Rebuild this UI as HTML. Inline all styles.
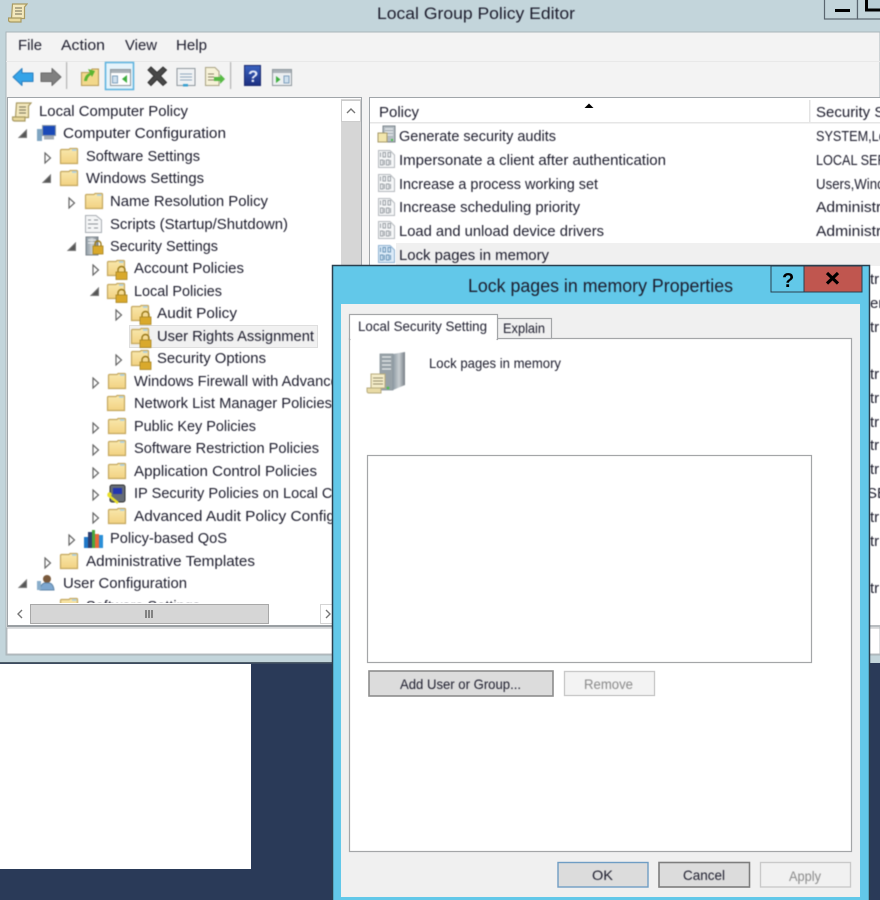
<!DOCTYPE html>
<html><head><meta charset="utf-8"><title>Local Group Policy Editor</title>
<style>
html,body{margin:0;padding:0;width:880px;height:900px;overflow:hidden;background:#2a3a58}
svg{display:block}
text{font-family:"Liberation Sans",sans-serif;font-size:15px;fill:#1c1c2c}
.t{filter:blur(.4px)}
.s{font-size:14px}
.g{fill:#8a8a8a}
</style></head><body>
<svg xmlns="http://www.w3.org/2000/svg" width="880" height="900" viewBox="0 0 880 900">
<defs>
<linearGradient id="fg" x1="0" y1="0" x2="0" y2="1"><stop offset="0" stop-color="#f9e8ad"/><stop offset="1" stop-color="#f2d282"/></linearGradient>
<linearGradient id="btn" x1="0" y1="0" x2="0" y2="1"><stop offset="0" stop-color="#3a62c0"/><stop offset="1" stop-color="#1c2f80"/></linearGradient>
<linearGradient id="srv" x1="0" y1="0" x2="1" y2="0"><stop offset="0" stop-color="#8d9aa3"/><stop offset=".5" stop-color="#c8ced2"/><stop offset="1" stop-color="#777f86"/></linearGradient>
<symbol id="folder" width="18" height="16" viewBox="0 0 18 16" overflow="visible">
<path d="M.5 2.500Q.5 1.500 1.500 1.500H9L10 .5H16.500Q17.500 .5 17.500 1.500V15.500H.5Z" fill="url(#fg)" stroke="#c4a75e" stroke-width="1.200"/>
<rect x="12" y="1.200" width="4.500" height="1.600" fill="#a9cfe6"/>
</symbol>
<symbol id="lockf" width="22" height="20" viewBox="0 0 22 20" overflow="visible">
<use href="#folder" x="0" y="0"/>
<path d="M11 12V10a3.500 3.500 0 0 1 7 0v2" fill="none" stroke="#9a7a1c" stroke-width="1.400"/>
<rect x="9" y="12" width="11" height="7.500" fill="#d9a92c" stroke="#a88420" stroke-width=".8"/>
</symbol>
<symbol id="ec" width="8" height="12" viewBox="0 0 8 12"><path d="M1 1L6.500 6L1 11Z" fill="#fff" stroke="#666" stroke-width="1.200"/></symbol>
<symbol id="eo" width="10" height="10" viewBox="0 0 10 10"><path d="M8.500 1V8.500H1Z" fill="#555" stroke="#777"/></symbol>
<symbol id="scroll" width="20" height="20" viewBox="0 0 20 20">
<path d="M4.500 1H19L16.500 4V15.500H3.500Z" fill="#f4e9bd" stroke="#a99a62" stroke-width="1.200"/>
<path d="M.5 15H13V19H3Q.5 19 .5 17Z" fill="#e9d99c" stroke="#a99a62" stroke-width="1.200"/>
<path d="M7 5H14M7 8H14M7 11H14" stroke="#8b8568" stroke-width="1.200"/>
</symbol>
<symbol id="bin" width="17" height="18" viewBox="0 0 17 18">
<path d="M.5.5H12L16.500 5V17.500H.5Z" fill="#f6f7f8" stroke="#b4b8bd"/>
<path d="M2.500 2.500V7M5 2.500h2.500v4.500H5ZM10 2.500h2.500v4.500H10ZM2.500 10h2.500v5H2.500ZM6.500 10V15M8.500 10h2.500v5H8.500ZM12.500 10V15" fill="none" stroke="#9aa0a6" stroke-width="1"/>
</symbol>
<symbol id="binb" width="17" height="18" viewBox="0 0 17 18">
<path d="M.5.5H12L16.500 5V17.500H.5Z" fill="#dcebf8" stroke="#8fb2d2"/>
<path d="M2.500 2.500V7M5 2.500h2.500v4.500H5ZM10 2.500h2.500v4.500H10ZM2.500 10h2.500v5H2.500ZM6.500 10V15M8.500 10h2.500v5H8.500ZM12.500 10V15" fill="none" stroke="#6b95b8" stroke-width="1"/>
</symbol>
</defs>

<!-- desktop -->
<rect width="880" height="900" fill="#2a3a58"/>
<rect x="0" y="664" width="251" height="205" fill="#fff"/>
<!-- main window -->
<rect x="0" y="0" width="880" height="663" fill="#c3d5db"/>
<rect x="0" y="662" width="332" height="1.500" fill="#4d5c68"/>
<rect x="6" y="32" width="874" height="623" fill="#f3f3f3" stroke="#a9b5ba"/>
<rect x="6" y="61" width="874" height="1" fill="#e8e8e8"/>
<!-- caption buttons -->
<rect x="824.500" y="-3" width="33" height="22" fill="#c3d5db" stroke="#5a6670" stroke-width="1.200"/>
<rect x="857.500" y="-3" width="30" height="22" fill="#c3d5db" stroke="#5a6670" stroke-width="1.200"/>
<rect x="835" y="9" width="15" height="3" fill="#000"/>
<rect x="866.500" y="-2" width="20" height="12" fill="#b9cfd6" stroke="#000" stroke-width="3"/>

<use href="#scroll" x="8" y="3"/>
<g class="t">
<text x="377" y="19" style="font-size:17px" textLength="198" lengthAdjust="spacingAndGlyphs">Local Group Policy Editor</text>
<text x="18" y="50" textLength="24" lengthAdjust="spacingAndGlyphs">File</text>
<text x="61" y="50" textLength="44" lengthAdjust="spacingAndGlyphs">Action</text>
<text x="125" y="50" textLength="32" lengthAdjust="spacingAndGlyphs">View</text>
<text x="176" y="50" textLength="31" lengthAdjust="spacingAndGlyphs">Help</text>
</g>

<!-- toolbar -->
<g class="t">
<path d="M13 77L22 68.500V73H33V81.500H22V85.500Z" fill="#35a4e8" stroke="#2b7fc0" stroke-linejoin="round"/>
<path d="M61 77L52 68.500V73H41V81.500H52V85.500Z" fill="#808080" stroke="#6a6a6a" stroke-linejoin="round"/>
<rect x="66" y="62" width="1.200" height="27" fill="#b4b4b4"/>
<path d="M81.500 72.500H90L92 69H98.500V85.500H81.500Z" fill="#f2d88b" stroke="#b89a55"/>
<path d="M84 81Q85 74 90 73L88 69L95 71L92 77L91 75Q88 76 87 81Z" fill="#5cb531"/>
<rect x="105.500" y="62.500" width="28" height="27" fill="#e5f3fb" stroke="#58b0dd" stroke-width="1.500"/>
<rect x="110.500" y="69.500" width="20" height="16" fill="#fff" stroke="#8e969c"/>
<rect x="111" y="70" width="19" height="3" fill="#aab2b8"/>
<path d="M112.500 76h5v7h-5Z" fill="#cfe0ee" stroke="#7fa0bd"/>
<path d="M127 75v8l-5-4Z" fill="#3fae3f"/>
<path d="M148 70l3-3 6 5.500 6-5.500 3.500 3-6 6 6 6.500-3.500 3-6-6-6 6-3-3 6-6.500Z" fill="#484848" stroke="#333"/>
<rect x="177" y="68.500" width="18" height="17" fill="#f0f2f4" stroke="#8f979d"/>
<path d="M180 74h12M180 77h12M180 80h12" stroke="#8fa7bd"/>
<rect x="183" y="84" width="5" height="2.500" fill="#39a0d0"/>
<path d="M205.500 67.500H215L219 71.500V85.500H205.500Z" fill="#f7f2d8" stroke="#a9a283"/>
<path d="M208 74h6M208 77h6M208 80h6" stroke="#8b8568"/>
<path d="M225 79l-5-5v3h-6v4h6v3Z" fill="#57b944"/>
<rect x="230" y="62" width="1.200" height="27" fill="#b4b4b4"/>
<rect x="244.500" y="65.500" width="16" height="20" fill="url(#btn)" stroke="#1b2a70"/>
<text x="248" y="82" style="font-size:17px;font-weight:bold;fill:#e4e9f8">?</text>
<rect x="272.500" y="69.500" width="19" height="16" fill="#eceff1" stroke="#8e969c"/>
<rect x="273" y="70" width="18" height="3" fill="#aab2b8"/>
<path d="M276 76v7l4.500-3.500Z" fill="#3fae3f"/>
<path d="M284 76h5v7h-5Z" fill="#cfe0ee" stroke="#7fa0bd"/>
</g>

<!-- tree panel -->
<rect x="7.500" y="97.500" width="354" height="529" fill="#fff" stroke="#a0a5a9"/>
<!-- highlight -->
<rect x="129.500" y="325.500" width="188" height="22" fill="#f1f1f1" stroke="#dedede"/>

<g class="t">
<use href="#scroll" x="12" y="102"/>
<text x="39" y="116" textLength="149" lengthAdjust="spacingAndGlyphs">Local Computer Policy</text>

<use href="#eo" x="18" y="129"/>
<rect x="42.500" y="125.500" width="13" height="10" fill="#1a4ab8" stroke="#8b99a8"/><rect x="37" y="129" width="5" height="12" fill="#7fa5c2"/><rect x="44" y="136" width="10" height="3.500" fill="#a5adb4"/>
<text x="63" y="138" textLength="163" lengthAdjust="spacingAndGlyphs">Computer Configuration</text>

<use href="#ec" x="44" y="152"/><use href="#folder" x="60" y="148"/>
<text x="86" y="161" textLength="114" lengthAdjust="spacingAndGlyphs">Software Settings</text>

<use href="#eo" x="42" y="174"/><use href="#folder" x="60" y="170"/>
<text x="86" y="183" textLength="118" lengthAdjust="spacingAndGlyphs">Windows Settings</text>

<use href="#ec" x="68" y="197"/><use href="#folder" x="85" y="193"/>
<text x="110" y="206" textLength="158" lengthAdjust="spacingAndGlyphs">Name Resolution Policy</text>

<path d="M85.500 215.500H96L101.500 220V232.500H85.500Z" fill="#f4f5f6" stroke="#a8adb3"/><path d="M88 220h3M94 220h4M88 224h10M88 228h3M94 228h4" stroke="#8d9298"/>
<text x="110" y="229" textLength="178" lengthAdjust="spacingAndGlyphs">Scripts (Startup/Shutdown)</text>

<use href="#eo" x="67" y="242"/>
<rect x="86" y="237" width="12" height="18" fill="url(#srv)" stroke="#7c858c"/><path d="M88 240h8M88 243h8" stroke="#eef0f2"/>
<path d="M95 246v-2a3 3 0 0 1 6 0v2" fill="none" stroke="#9a7a1c" stroke-width="1.400"/><rect x="93" y="246" width="10" height="8" fill="#d9a92c" stroke="#a88420" stroke-width=".8"/>
<text x="110" y="251" textLength="108" lengthAdjust="spacingAndGlyphs">Security Settings</text>

<use href="#ec" x="92" y="264"/><use href="#lockf" x="107" y="260"/>
<text x="134" y="273" textLength="110" lengthAdjust="spacingAndGlyphs">Account Policies</text>

<use href="#eo" x="90" y="287"/><use href="#lockf" x="107" y="283"/>
<text x="134" y="296" textLength="88" lengthAdjust="spacingAndGlyphs">Local Policies</text>

<use href="#ec" x="115" y="309"/><use href="#lockf" x="131" y="305"/>
<text x="157" y="318" textLength="80" lengthAdjust="spacingAndGlyphs">Audit Policy</text>

<use href="#lockf" x="131" y="328"/>
<text x="157" y="341" textLength="157" lengthAdjust="spacingAndGlyphs">User Rights Assignment</text>

<use href="#ec" x="115" y="354"/><use href="#lockf" x="131" y="350"/>
<text x="157" y="363" textLength="109" lengthAdjust="spacingAndGlyphs">Security Options</text>

<use href="#ec" x="92" y="377"/><use href="#folder" x="108" y="373"/>
<text x="134" y="386" textLength="270" lengthAdjust="spacingAndGlyphs">Windows Firewall with Advanced Security</text>

<use href="#folder" x="107" y="395"/>
<text x="134" y="408" textLength="198" lengthAdjust="spacingAndGlyphs">Network List Manager Policies</text>

<use href="#ec" x="92" y="422"/><use href="#folder" x="108" y="418"/>
<text x="134" y="431" textLength="122" lengthAdjust="spacingAndGlyphs">Public Key Policies</text>

<use href="#ec" x="92" y="444"/><use href="#folder" x="108" y="440"/>
<text x="134" y="453" textLength="185" lengthAdjust="spacingAndGlyphs">Software Restriction Policies</text>

<use href="#ec" x="92" y="467"/><use href="#folder" x="108" y="463"/>
<text x="134" y="476" textLength="183" lengthAdjust="spacingAndGlyphs">Application Control Policies</text>

<use href="#ec" x="92" y="489"/>
<rect x="110" y="485" width="15" height="17" rx="2" fill="#656c76" stroke="#333"/><rect x="113" y="488" width="9" height="6" fill="#2236b0"/><path d="M108 495L118 503" stroke="#e8df2a" stroke-width="2.500"/><circle cx="109.500" cy="494.500" r="2.200" fill="#e8df2a"/>
<text x="134" y="498" textLength="252" lengthAdjust="spacingAndGlyphs">IP Security Policies on Local Computer</text>

<use href="#ec" x="92" y="512"/><use href="#folder" x="108" y="508"/>
<text x="134" y="521" textLength="248" lengthAdjust="spacingAndGlyphs">Advanced Audit Policy Configuration</text>

<use href="#ec" x="68" y="534"/>
<rect x="84" y="537" width="4" height="11" fill="#1f78c8"/><rect x="88" y="532" width="4" height="16" fill="#2c3f70"/><rect x="92" y="530" width="3" height="18" fill="#49a63c"/><rect x="95" y="534" width="4" height="14" fill="#e8693a"/><rect x="99" y="535" width="4" height="13" fill="#2a8fd8"/>
<text x="110" y="543" textLength="117" lengthAdjust="spacingAndGlyphs">Policy-based QoS</text>

<use href="#ec" x="44" y="557"/><use href="#folder" x="60" y="553"/>
<text x="86" y="566" textLength="169" lengthAdjust="spacingAndGlyphs">Administrative Templates</text>

<use href="#eo" x="18" y="579"/>
<circle cx="47" cy="579" r="4" fill="#7a5a3c"/><path d="M40 590Q41 582 47 583Q53 582 54 590Z" fill="#7ea7cf" stroke="#5f85a8"/><rect x="37" y="581" width="4" height="9" fill="#8aaecb"/>
<text x="63" y="588" textLength="124" lengthAdjust="spacingAndGlyphs">User Configuration</text>

<use href="#folder" x="60" y="598"/>
<text x="86" y="611" textLength="114" lengthAdjust="spacingAndGlyphs">Software Settings</text>
</g>

<!-- tree scrollbars -->
<rect x="8" y="603" width="333" height="23" fill="#fff"/>
<rect x="10" y="604" width="311" height="20" fill="#fff"/>
<rect x="30.500" y="604.500" width="238" height="19" fill="#d6d6d6" stroke="#a8a8a8"/>
<path d="M146 610v8M149 610v8M152 610v8" stroke="#555" stroke-width="1.300"/>
<path d="M22 610l-4 4 4 4" fill="none" stroke="#777" stroke-width="1.400"/>
<rect x="320.500" y="604.500" width="20" height="19" fill="#fff" stroke="#d4d4d4"/>
<path d="M326 610l4 4-4 4" fill="none" stroke="#777" stroke-width="1.400"/>
<rect x="7" y="625" width="355" height="2" fill="#9a9fa3"/>
<rect x="341" y="99" width="20" height="527" fill="#d6d6d6"/>
<rect x="341.500" y="100.500" width="19" height="21" fill="#fff" stroke="#ccc"/>
<path d="M347 113l4-4 4 4" fill="none" stroke="#777" stroke-width="1.400"/>

<!-- status bar -->
<rect x="7" y="628" width="873" height="26" fill="#fff" stroke="#b9bdc0"/>

<!-- list panel -->
<rect x="369.500" y="97.500" width="520" height="529" fill="#fff" stroke="#a0a5a9"/>
<rect x="370" y="122" width="510" height="1.500" fill="#e6e6e6"/>
<rect x="809" y="100" width="1.500" height="22" fill="#e3e3e3"/>
<rect x="396" y="243" width="484" height="23" fill="#f0f0f0"/>
<path d="M584.500 108L589 103.500L593.500 108Z" fill="#000"/>
<g class="t">
<text x="379" y="117" textLength="40" lengthAdjust="spacingAndGlyphs">Policy</text>
<text x="816" y="117">Security Setting</text>

<rect x="383" y="126" width="12" height="16" fill="#b4bcc2" stroke="#7c858c"/><path d="M385 129h8M385 132h8M385 135h8" stroke="#eef0f2"/>
<path d="M378 133h9v9h-9Z" fill="#f2e6ad" stroke="#a79a6a"/><rect x="391" y="139" width="2" height="2" fill="#48c048"/>
<text x="399" y="141" textLength="157" lengthAdjust="spacingAndGlyphs">Generate security audits</text>
<text x="816" y="141" textLength="86" lengthAdjust="spacingAndGlyphs">SYSTEM,Local</text>

<use href="#bin" x="378" y="150"/>
<text x="399" y="165" textLength="267" lengthAdjust="spacingAndGlyphs">Impersonate a client after authentication</text>
<text x="816" y="165" textLength="100" lengthAdjust="spacingAndGlyphs">LOCAL SERVICE</text>

<use href="#bin" x="378" y="174"/>
<text x="399" y="189" textLength="199" lengthAdjust="spacingAndGlyphs">Increase a process working set</text>
<text x="816" y="189" textLength="92" lengthAdjust="spacingAndGlyphs">Users,Windows</text>

<use href="#bin" x="378" y="198"/>
<text x="399" y="212" textLength="181" lengthAdjust="spacingAndGlyphs">Increase scheduling priority</text>
<text x="816" y="212" textLength="100" lengthAdjust="spacingAndGlyphs">Administrators</text>

<use href="#bin" x="378" y="221"/>
<text x="399" y="236" textLength="205" lengthAdjust="spacingAndGlyphs">Load and unload device drivers</text>
<text x="816" y="236" textLength="100" lengthAdjust="spacingAndGlyphs">Administrators</text>

<use href="#binb" x="378" y="245"/>
<text x="399" y="260" textLength="150" lengthAdjust="spacingAndGlyphs">Lock pages in memory</text>

<!-- right column fragments beside the dialog -->
<text x="870" y="284">tr</text>
<text x="870" y="308">er</text>
<text x="870" y="332">tr</text>
<text x="870" y="379">tr</text>
<text x="870" y="403">tr</text>
<text x="870" y="427">tr</text>
<text x="870" y="450">tr</text>
<text x="870" y="474">tr</text>
<text x="867" y="498">SE</text>
<text x="870" y="522">tr</text>
<text x="870" y="546">tr</text>
<text x="870" y="593">tr</text>
</g>
<rect x="870" y="625" width="10" height="2" fill="#b9bdc0"/>

<!-- dialog -->
<rect x="332.500" y="265.500" width="537" height="640" fill="#62c8e9" stroke="#2a3f4e" stroke-width="1.500"/>
<rect x="341" y="304" width="519" height="593" fill="#f0f0f0"/>
<rect x="771" y="266" width="33" height="26" fill="#62c8e9" stroke="#2a3f4e"/>
<rect x="804" y="266" width="58" height="26" fill="#c0564f" stroke="#2a3f4e"/>
<text x="782" y="287" style="font-size:20px;font-weight:bold;fill:#000">?</text>
<path d="M827 273L838 283.500M838 273L827 283.500" stroke="#000" stroke-width="3.200"/>

<!-- tab pane -->
<rect x="349.500" y="338.500" width="502" height="513" fill="#fff" stroke="#a4a6a8" stroke-width="1.200"/>
<rect x="497.500" y="318.500" width="54" height="20" fill="#f0f0f0" stroke="#a4a6a8" stroke-width="1.200"/>
<rect x="349.500" y="314.500" width="148" height="25" fill="#fff" stroke="#a4a6a8" stroke-width="1.200"/>
<rect x="350.500" y="336" width="146" height="5" fill="#fff"/>

<!-- server icon -->
<g class="t">
<rect x="380" y="354" width="13" height="36" fill="#98a2a8" stroke="#8a949a" stroke-width=".8"/>
<path d="M393 354L405 352V385L393 390Z" fill="url(#srv)"/>
<path d="M382 357h9M382 361h9M382 365h9M382 369h9" stroke="#e6eaec" stroke-width="1.300"/>
<circle cx="388" cy="388" r="1.400" fill="#4fc04f"/>
<path d="M371 374H385V388H371Z" fill="#f4ecc8" stroke="#b7ab7c"/>
<path d="M373 378h10M373 381h10M373 384h10" stroke="#968e6c"/>
<path d="M367 388H381V393H369Q367 393 367 391Z" fill="#e9dba6" stroke="#b7ab7c"/>
</g>

<!-- list + buttons -->
<rect x="367.500" y="455.500" width="444" height="207" fill="#fff" stroke="#a4a6a8" stroke-width="1.200"/>
<rect x="369" y="671" width="184" height="25" fill="#dcdcdc" stroke="#8d8d8d" stroke-width="1.600"/>
<rect x="564.500" y="671.500" width="90" height="24" fill="#f3f3f3" stroke="#cacaca" stroke-width="1.400"/>
<rect x="558" y="862.500" width="90" height="24.500" fill="#dcdcdc" stroke="#6f9dc4" stroke-width="1.400"/>
<rect x="659" y="862.500" width="90.500" height="24.500" fill="#dcdcdc" stroke="#7e7e7e" stroke-width="1.600"/>
<rect x="760.500" y="862.500" width="90" height="24.500" fill="#f1f1f1" stroke="#cacaca" stroke-width="1.400"/>

<g class="t">
<text x="468" y="292" style="font-size:18px" textLength="265" lengthAdjust="spacingAndGlyphs">Lock pages in memory Properties</text>
<text class="s" x="358" y="331" textLength="129" lengthAdjust="spacingAndGlyphs">Local Security Setting</text>
<text class="s" x="503" y="333" textLength="42" lengthAdjust="spacingAndGlyphs">Explain</text>
<text class="s" x="429" y="368" textLength="132" lengthAdjust="spacingAndGlyphs">Lock pages in memory</text>
<text class="s" x="400" y="689" textLength="121" lengthAdjust="spacingAndGlyphs">Add User or Group...</text>
<text class="s g" x="584" y="689" textLength="49" lengthAdjust="spacingAndGlyphs">Remove</text>
<text class="s" x="592" y="880" textLength="21" lengthAdjust="spacingAndGlyphs">OK</text>
<text class="s" x="683" y="880" textLength="42" lengthAdjust="spacingAndGlyphs">Cancel</text>
<text class="s g" x="789" y="881" textLength="32" lengthAdjust="spacingAndGlyphs">Apply</text>
</g>
</svg>
</body></html>
